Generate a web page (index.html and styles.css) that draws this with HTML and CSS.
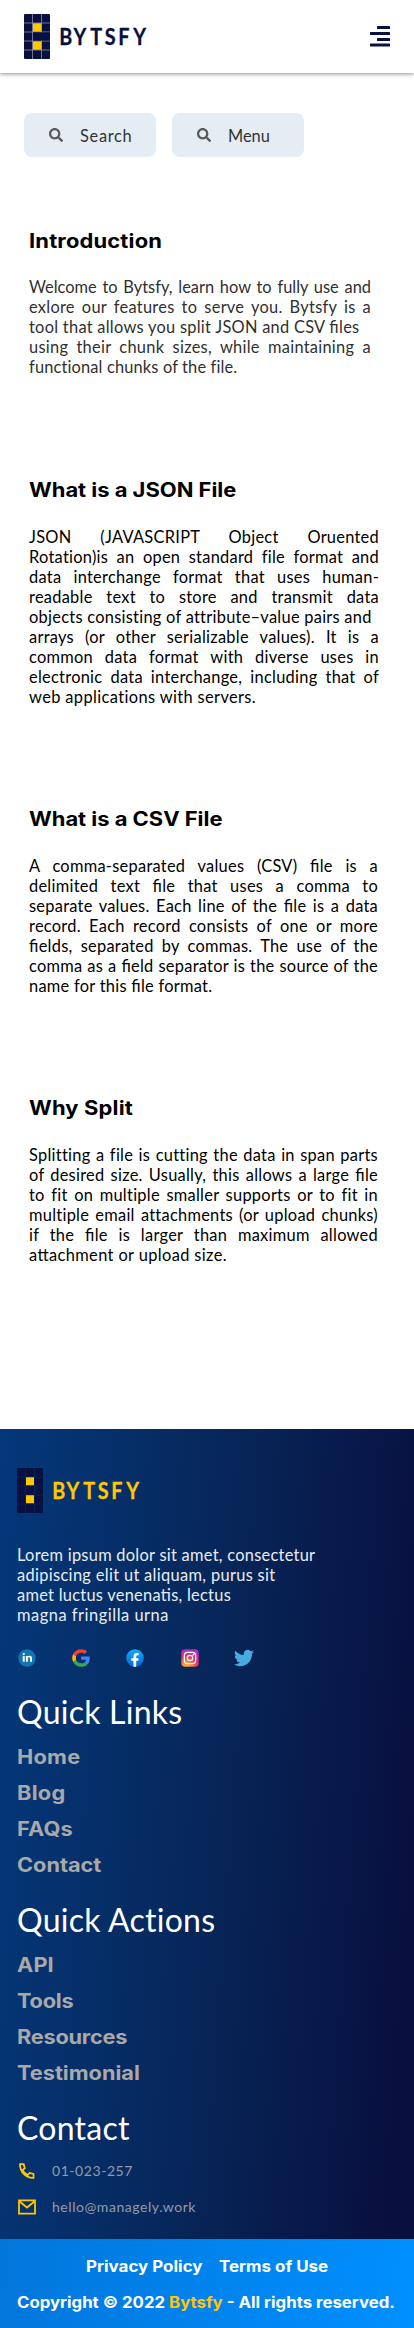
FILE: index.html
```html
<!DOCTYPE html>
<html lang="en">
<head>
<meta charset="utf-8">
<title>Bytsfy</title>
<link rel="stylesheet" href="styles.css">
</head>
<body>
<header class="header">
  <svg class="logo" width="126" height="45" viewBox="0 0 126 45">
    <rect width="26" height="45" rx="1" fill="#08103f"/>
    <path class="grid" d="M8.5 0V45M17.5 0V45M0 9H26M0 18H26M0 27H26M0 36H26"/>
    <path fill="#08103f" d="M9 18.5h16.500v8H9z"/>
    <path fill="#ffc700" d="M9 9.300h8.500v8.500H9zM9 27.300h8.500v8.500H9z"/>
    <text class="wordmark" transform="scale(.86 1)" y="31.200" x="41 57.500 77 94 109.500 127">BYTSFY</text>
  </svg>
  <svg class="menu-icon" width="20" height="21" viewBox="0 0 20 21" fill="#08103f"><rect x="7" width="13" height="3" rx=".5"/><rect y="6" width="20" height="3" rx=".5"/><rect x="7" y="12" width="13" height="3" rx=".5"/><rect y="17.600" width="20" height="3" rx=".5"/></svg>
</header>

<main>
  <nav class="tools">
    <a class="tool"><svg width="14" height="14" viewBox="0 0 512 512"><path id="glass" fill="#595959" d="M505 442.700L405.300 343c-4.500-4.500-10.600-7-17-7H372c27.600-35.300 44-79.700 44-128C416 93.100 322.900 0 208 0S0 93.100 0 208s93.100 208 208 208c48.300 0 92.700-16.400 128-44v16.300c0 6.400 2.500 12.500 7 17l99.700 99.700c9.400 9.400 24.600 9.400 33.900 0l28.300-28.300c9.400-9.400 9.400-24.600.1-34zM208 336c-70.700 0-128-57.200-128-128 0-70.700 57.200-128 128-128 70.700 0 128 57.200 128 128 0 70.700-57.200 128-128 128z"/></svg><span class="ls-70">Search</span></a>
    <a class="tool"><svg width="14" height="14" viewBox="0 0 512 512"><use href="#glass"/></svg><span class="ls-0">Menu</span></a>
  </nav>

  <section class="doc doc-intro">
    <h2 class="ls-15">Introduction</h2>
    <p>
      <span class="full ls-0">Welcome to Bytsfy, learn how to fully use and</span>
      <span class="full">exlore our features to serve you. Bytsfy is a</span>
      <span>tool that allows you split JSON and CSV files</span>
      <span class="full">using their chunk sizes, while maintaining a</span>
      <span class="plain ls-15">functional chunks of the file.</span>
    </p>
  </section>
  <section class="doc doc-json">
    <h2>What is a JSON File</h2>
    <p>
      <span class="full">JSON (JAVASCRIPT Object Oruented</span>
      <span class="full plain">Rotation)is an open standard file format and</span>
      <span class="full">data interchange format that uses human-</span>
      <span class="full">readable text to store and transmit data</span>
      <span class="plain">objects consisting of attribute–value pairs and</span>
      <span class="full">arrays (or other serializable values). It is a</span>
      <span class="full">common data format with diverse uses in</span>
      <span class="full">electronic data interchange, including that of</span>
      <span class="plain ls-38">web applications with servers.</span>
    </p>
  </section>
  <section class="doc">
    <h2>What is a CSV File</h2>
    <p>
      <span class="full">A comma-separated values (CSV) file is a</span>
      <span class="full">delimited text file that uses a comma to</span>
      <span class="full">separate values. Each line of the file is a data</span>
      <span class="full">record. Each record consists of one or more</span>
      <span class="full">fields, separated by commas. The use of the</span>
      <span class="full">comma as a field separator is the source of the</span>
      <span>name for this file format.</span>
    </p>
  </section>
  <section class="doc">
    <h2 class="ls-15">Why Split</h2>
    <p>
      <span class="full plain">Splitting a file is cutting the data in span parts</span>
      <span class="full">of desired size. Usually, this allows a large file</span>
      <span class="full plain">to fit on multiple smaller supports or to fit in</span>
      <span class="full plain">multiple email attachments (or upload chunks)</span>
      <span class="full">if the file is larger than maximum allowed</span>
      <span class="ls-38">attachment or upload size.</span>
    </p>
  </section>
</main>

<footer class="footer">
  <svg class="logo logo-dark" width="126" height="45" viewBox="0 0 126 45">
    <rect width="26" height="45" rx="1" fill="#08103f"/>
    <path class="grid" d="M8.500 0V45M17.500 0V45M0 9H26M0 18H26M0 27H26M0 36H26"/>
    <path fill="#ffc700" d="M9 9.300h8v8H9zM9 27.300h8v8H9z"/>
    <text class="wordmark" transform="scale(.86 1)" y="31.200" x="41 57.500 77 94 109.500 127">BYTSFY</text>
  </svg>
  <p class="about">
    <span>Lorem ipsum dolor sit amet, consectetur</span>
    <span class="ls-33">adipiscing elit ut aliquam, purus sit</span>
    <span>amet luctus venenatis, lectus</span>
    <span class="ls-53">magna fringilla urna</span>
  </p>
  <div class="social">
    <svg width="20" height="20" viewBox="0 0 32 32"><circle cx="16" cy="16" r="14" fill="#1275b1"/><g fill="#fff"><circle cx="10.800" cy="9.700" r="1.800"/><path d="M9.250 12.630h3.100V22h-3.100zM17.320 12.630h-3.090V22h3.090v-4.800c0-1.100.38-2.210 1.890-2.210 1.700 0 1.690 1.440 1.680 2.570V22H24v-4.950c-.03-3.150-.85-4.610-3.560-4.610-1.600 0-2.600.73-3.120 1.390z"/></g></svg>
    <svg width="20" height="20" viewBox="0 0 32 32"><path fill="#4285f4" d="M30 16.310c0-1.150-.1-1.990-.3-2.860H16.290v5.190h7.870c-.16 1.300-1.020 3.240-2.920 4.550l4.500 3.420c2.700-2.440 4.260-6.040 4.260-10.300z"/><path fill="#34a853" d="M16.290 30c3.850 0 7.090-1.240 9.460-3.390l-4.510-3.420c-1.210.82-2.830 1.400-4.950 1.400-3.780 0-6.990-2.450-8.130-5.820l-4.640 3.510C5.870 26.860 10.700 30 16.290 30z"/><path fill="#fbbc05" d="M8.160 18.770a8.700 8.700 0 010-5.540L3.520 9.720a13.900 13.900 0 000 12.560z"/><path fill="#eb4335" d="M16.290 7.410c2.680 0 4.490 1.140 5.520 2.090l4.030-3.860C23.370 3.380 20.140 2 16.290 2 10.700 2 5.870 5.140 3.520 9.720l4.620 3.510c1.160-3.370 4.370-5.820 8.150-5.820z"/></svg>
    <svg width="20" height="20" viewBox="0 0 32 32"><defs><linearGradient id="fb" x2="0" y2="1"><stop stop-color="#18acfe"/><stop offset="1" stop-color="#0163e0"/></linearGradient></defs><circle cx="16" cy="16" r="14" fill="url(#fb)"/><path fill="#fff" d="M21.210 20.280l.63-3.950h-3.890v-2.560c0-1.080.54-2.140 2.280-2.140H22V8.270S20.390 8 18.860 8c-3.210 0-5.300 1.890-5.300 5.320v3.010H10v3.950h3.560v9.550a14 14 0 004.390 0v-9.550z"/></svg>
    <svg width="20" height="20" viewBox="0 0 32 32"><defs><radialGradient id="ig" cx=".3" cy="1" r="1.050"><stop stop-color="#ffb13d"/><stop offset=".3" stop-color="#fa7e3c"/><stop offset=".6" stop-color="#e0316c"/><stop offset="1" stop-color="#a033c8"/></radialGradient></defs><rect x="2" y="2" width="28" height="28" rx="6" fill="url(#ig)"/><g fill="none" stroke="#fff" stroke-width="2"><rect x="7" y="7" width="18" height="18" rx="5"/><circle cx="16" cy="16" r="4.300"/></g><circle cx="21.400" cy="10.600" r="1.400" fill="#fff"/></svg>
    <svg width="20" height="20" viewBox="0 0 24 24"><path fill="#47acdf" d="M23.950 4.570a10 10 0 01-2.820.78 4.960 4.960 0 002.160-2.730c-.95.560-2 .960-3.130 1.190a4.920 4.920 0 00-8.380 4.480C7.690 8.100 4.070 6.130 1.640 3.160a4.820 4.820 0 00-.67 2.480c0 1.710.87 3.210 2.190 4.090a4.900 4.900 0 01-2.230-.61v.06a4.920 4.920 0 003.950 4.820 5 5 0 01-2.210.09 4.940 4.940 0 004.600 3.410A9.870 9.870 0 010 19.540a14 14 0 007.560 2.210c9.050 0 14-7.500 14-13.990l-.02-.63a9.940 9.940 0 002.410-2.560z"/></svg>
  </div>

  <h3 class="ls-25">Quick Links</h3>
  <ul class="links">
    <li class="ls-25">Home</li><li class="ls-25">Blog</li><li class="ls-15">FAQs</li><li>Contact</li>
  </ul>
  <h3 class="ls-25">Quick Actions</h3>
  <ul class="links">
    <li class="ls-15">API</li><li class="tight">Tools</li><li class="tight">Resources</li><li>Testimonial</li>
  </ul>
  <h3 class="ls-25">Contact</h3>
  <div class="contact">
    <div class="contact-row"><svg width="20" height="20" viewBox="0 0 20 20" fill="none" stroke="#ffc700" stroke-width="1.800"><path d="M3 3.200h3.700l1.100 4-2.200 1.900a11 11 0 005 5l2-2.200 3.900 1.100v3.800C9.500 17.300 2.800 11 3 3.200z"/></svg><span>01-023-257</span></div>
    <div class="contact-row"><svg width="20" height="20" viewBox="0 0 20 20" fill="none" stroke="#ffc700" stroke-width="1.800"><path d="M2 3.400h16v13.200H2zM2 4l8 6.500L18 4"/></svg><span>hello@managely.work</span></div>
  </div>
</footer>
<div class="legal">
  <div class="legal-links"><a>Privacy Policy</a><a>Terms of Use</a></div>
  <div class="copyright">Copyright © 2022 <b>Bytsfy</b> - All rights reserved.</div>
</div>
</body>
</html>
```
FILE: styles.css
```css
* { box-sizing: border-box; }
body {
  margin: 0;
  width: 414px;
  background: #fff;
  font-family: Lato, sans-serif;
  font-size: 16.4px;
  line-height: 20px;
  letter-spacing: .27px;
  color: #000;
  font-feature-settings: "liga" 1;
}
h2, h3, p, ul { margin: 0; padding: 0; }
svg { display: block; flex: none; }

.header {
  height: 73px;
  padding: 14px 24px 0;
  display: flex;
  justify-content: space-between;
  box-shadow: 0 1px 4px rgba(0, 0, 0, .45);
}
.menu-icon { margin-top: 12px; }
.grid { fill: none; stroke: #8b90ab; stroke-width: .8; }
.wordmark { font: 700 23px Lato, sans-serif; letter-spacing: 0; fill: #08103f; stroke: #08103f; stroke-width: .3; }
.logo-dark .grid { stroke: #0a2459; }
.logo-dark .wordmark { fill: #ffc700; stroke: #ffc700; }

.tools { display: flex; gap: 16px; padding: 40px 24px 0; }
.tool {
  width: 132px;
  height: 44px;
  padding-left: 25px;
  border-radius: 8px;
  background: #e4edf3;
  color: #303336;
  display: flex;
  align-items: center;
  gap: 17px;
}
.tool span { padding-top: 1px; }

.doc { padding: 100px 36px 0 29px; }
.doc h2 {
  width: fit-content;
  margin-bottom: 25px;
  font: 700 19.4px/24px Inter, sans-serif;
  letter-spacing: 0;
  transform: scaleX(1.13);
  transform-origin: left;
}
.doc h2.ls-15 { letter-spacing: .15px; }
.doc p span { display: block; white-space: nowrap; }
.doc p .full { text-align-last: justify; }
.doc-intro { padding: 72px 43px 0 29px; color: #303030; }
.doc-intro h2 { margin-bottom: 24px; color: #000; }
.doc-json { padding: 101px 35px 0 29px; }
.plain, h3 { font-feature-settings: "liga" 0; }

.footer {
  height: 810px;
  margin-top: 164px;
  padding: 39px 17px 0;
  background: linear-gradient(94deg, #04387a 0%, #072659 50%, #08103f 94%);
  color: #fff;
}
.about { margin-top: 32px; color: #e9edf3; }
.about span { display: block; }
.social { margin-top: 23px; display: flex; gap: 34.2px; }
.footer h3 { font-weight: 400; font-size: 32px; line-height: 40px; padding-top: 1px; }
.social + h3 { margin-top: 23px; }
.links {
  width: fit-content;
  list-style: none;
  margin: 7px 0 16px;
  color: #a9a9a9;
  font: 700 19.4px/36px Inter, sans-serif;
  letter-spacing: 0;
  transform: scaleX(1.12);
  transform-origin: left;
}
.contact { margin-top: 5px; color: #959ba8; font-size: 14px; letter-spacing: .56px; }
.contact-row { height: 36px; display: flex; align-items: center; gap: 15px; }

.legal {
  height: 89px;
  padding-top: 10px;
  background: linear-gradient(95deg, #0276db, #0090ff);
  color: #fff;
  font: 700 15.4px/36px Inter, sans-serif;
  letter-spacing: 0;
}
.legal-links { width: fit-content; margin: 0 auto; display: flex; gap: 15px; transform: scaleX(1.1); }
.copyright { width: fit-content; margin-left: 17px; white-space: nowrap; transform: scaleX(1.09); transform-origin: left; }
.copyright b { color: #ffc700; font-weight: 700; }

.ls-0 { letter-spacing: 0; }
.ls-15 { letter-spacing: .15px; }
.ls-25 { letter-spacing: .25px; }
.ls-33 { letter-spacing: .33px; }
.ls-38 { letter-spacing: .38px; }
.ls-53 { letter-spacing: .53px; }
.ls-70 { letter-spacing: .7px; }
.tight { letter-spacing: -.2px; }
```
